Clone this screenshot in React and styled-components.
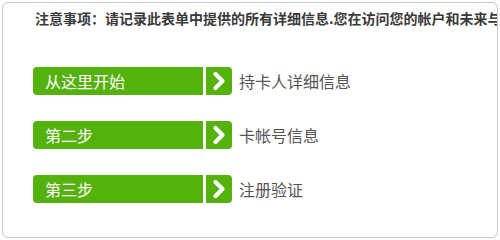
import styled, { createGlobalStyle } from "styled-components";

const Global = createGlobalStyle`
  body {
    margin: 0;
    background: #fff;
    font-family: "Noto Sans CJK SC", "Noto Sans", sans-serif;
  }
`;

const Card = styled.div`
  margin: 2px;
  width: 496px;
  height: 236px;
  box-sizing: border-box;
  border: 1px solid #c8c8c8;
  border-radius: 6px;
  padding: 5px 0 0 30px;
  overflow: hidden;
`;

const Notice = styled.div`
  padding-left: 2px;
  font-size: 14px;
  font-weight: bold;
  line-height: 20px;
  color: #3a3a3a;
  white-space: nowrap;
`;

const Steps = styled.div`
  margin-top: 39px;
  display: flex;
  flex-direction: column;
  gap: 26px;
`;

const Row = styled.div`
  display: flex;
  align-items: center;
  height: 28px;
`;

const Label = styled.div`
  width: 170px;
  height: 28px;
  box-sizing: border-box;
  padding-left: 12px;
  display: flex;
  align-items: center;
  background: #55b20c;
  border-radius: 4px 0 0 4px;
  color: #fff;
  font-size: 16px;
`;

const Arrow = styled.div`
  margin-left: 3px;
  width: 26px;
  height: 28px;
  display: flex;
  align-items: center;
  justify-content: center;
  background: #55b20c;
  border-radius: 0 4px 4px 0;
`;

const Desc = styled.div`
  margin-left: 7px;
  font-size: 16px;
  color: #555;
`;

const steps = [
  { label: "从这里开始", desc: "持卡人详细信息" },
  { label: "第二步", desc: "卡帐号信息" },
  { label: "第三步", desc: "注册验证" },
];

function Chevron() {
  return (
    <svg width="14" height="20" viewBox="0 0 14 20">
      <path
        d="M3.5 3 L10.5 10 L3.5 17"
        fill="none"
        stroke="#fff"
        strokeWidth="4.2"
        strokeLinecap="round"
        strokeLinejoin="round"
      />
    </svg>
  );
}

export default function App() {
  return (
    <>
      <Global />
      <Card>
        <Notice>注意事项：请记录此表单中提供的所有详细信息.您在访问您的帐户和未来与</Notice>
        <Steps>
          {steps.map((s) => (
            <Row key={s.label}>
              <Label>{s.label}</Label>
              <Arrow>
                <Chevron />
              </Arrow>
              <Desc>{s.desc}</Desc>
            </Row>
          ))}
        </Steps>
      </Card>
    </>
  );
}
